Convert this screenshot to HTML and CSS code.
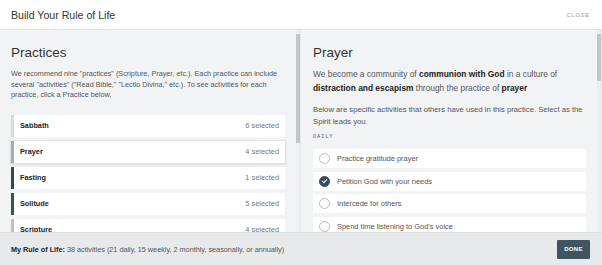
FILE: index.html
```html
<!DOCTYPE html>
<html lang="en">
<head>
  <meta charset="UTF-8">
  <meta name="viewport" content="width=device-width, initial-scale=1.0">
  <title>Build Your Rule of Life</title>
  <link rel="stylesheet" href="styles.css">
</head>
<body>
  <div class="modal">
    <div class="modal-header">
      <h1 class="modal-title">Build Your Rule of Life</h1>
      <a href="#" class="close-link">CLOSE</a>
    </div>

    <div class="modal-body">
      <div class="panel panel-practices">
        <div class="panel-content">
          <h2 class="panel-title">Practices</h2>
          <p class="intro">
            We recommend nine "practices" (Scripture, Prayer, etc.). Each practice can include
            several "activities" ("Read Bible," "Lectio Divina," etc.). To see activities for each
            practice, click a Practice below.
          </p>

          <ul class="practice-list">
            <li class="practice sabbath"><span class="practice-name">Sabbath</span><span class="practice-count">6 selected</span></li>
            <li class="practice prayer active"><span class="practice-name">Prayer</span><span class="practice-count">4 selected</span></li>
            <li class="practice fasting"><span class="practice-name">Fasting</span><span class="practice-count">1 selected</span></li>
            <li class="practice solitude"><span class="practice-name">Solitude</span><span class="practice-count">5 selected</span></li>
            <li class="practice scripture"><span class="practice-name">Scripture</span><span class="practice-count">4 selected</span></li>
          </ul>
        </div>
        <div class="scrollbar"><div class="thumb thumb-practices"></div></div>
      </div>

      <div class="panel panel-detail">
        <div class="panel-content">
          <h2 class="panel-title">Prayer</h2>
          <p class="lead">
            We become a community of <strong>communion with God</strong> in a culture of
            <strong>distraction and escapism</strong> through the practice of <strong>prayer</strong>
          </p>
          <p class="hint">
            Below are specific activities that others have used in this practice. Select as the
            Spirit leads you.
          </p>

          <div class="group-label">DAILY</div>
          <ul class="activity-list">
            <li class="activity"><span class="radio"></span>Practice gratitude prayer</li>
            <li class="activity checked"><span class="radio"></span>Petition God with your needs</li>
            <li class="activity"><span class="radio"></span>Intercede for others</li>
            <li class="activity"><span class="radio"></span>Spend time listening to God's voice</li>
          </ul>
        </div>
        <div class="scrollbar"><div class="thumb thumb-detail"></div></div>
      </div>
    </div>

    <div class="modal-footer">
      <p class="summary"><strong>My Rule of Life:</strong> 38 activities (21 daily, 15 weekly, 2 monthly, seasonally, or annually)</p>
      <button class="button">DONE</button>
    </div>
  </div>
</body>
</html>
```

FILE: styles.css
```css
* {
  box-sizing: border-box;
}
body {
  font-family: 'Liberation Sans', Arial, sans-serif;
  margin: 0;
  padding: 0;
  background-color: #ffffff;
  color: #333333;
}
.modal {
  display: flex;
  flex-direction: column;
  height: 265px;
  width: 602px;
}
.modal-header {
  height: 30px;
  flex: none;
  display: flex;
  justify-content: space-between;
  align-items: center;
  padding: 0 12px 0 11px;
  background-color: white;
  border-bottom: 1px solid #e3e4e6;
}
.modal-title {
  font-size: 10.6px;
  font-weight: 400;
  color: #333333;
  margin: 0;
}
.close-link {
  font-size: 5.6px;
  letter-spacing: 0.9px;
  color: #9a9a9a;
  text-decoration: none;
}
.modal-body {
  flex: 1;
  min-height: 0;
  display: grid;
  grid-template-columns: 301px 301px;
  background-color: #f2f3f5;
}
.panel {
  display: flex;
  min-height: 0;
  overflow: hidden;
  border-right: 1px solid #e6e7e9;
}
.panel-content {
  flex: 1;
  min-width: 0;
  overflow: hidden;
  padding: 15px 11px 0 11px;
}
.panel-detail .panel-content {
  padding-left: 12px;
}
.scrollbar {
  width: 4px;
  flex: none;
  padding-top: 4px;
  background-color: #eceef0;
}
.thumb {
  background-color: #c4c4c4;
}
.thumb-practices {
  height: 109px;
}
.thumb-detail {
  height: 47px;
}
.panel-title {
  font-size: 13.5px;
  font-weight: 400;
  color: #333333;
  margin: 0 0 9px 0;
}
.intro {
  font-size: 7.25px;
  line-height: 10.5px;
  color: #555555;
  margin: 0 0 14px 0;
}
.practice-list,
.activity-list {
  list-style: none;
  margin: 0;
  padding: 0;
}
.practice {
  display: flex;
  justify-content: space-between;
  align-items: center;
  height: 22px;
  margin-bottom: 4px;
  padding: 0 6px 0 6px;
  background-color: white;
  border-left: 3px solid #cccccc;
}
.practice.active {
  box-shadow: 0 1px 3px rgba(0, 0, 0, 0.18);
  outline: 1px solid #e2e3e5;
}
.practice-name {
  font-size: 7.3px;
  font-weight: 700;
  color: #222222;
}
.practice-count {
  font-size: 7.4px;
  color: #777777;
}
.sabbath { border-left-color: #d3dcd5; }
.prayer { border-left-color: #a5acb2; }
.fasting { border-left-color: #3a4650; }
.solitude { border-left-color: #3a5447; }
.scripture { border-left-color: #c9bfb7; }
.lead {
  font-size: 8.4px;
  line-height: 14px;
  color: #555555;
  margin: -2px 0 9px 0;
}
.lead strong {
  color: #222222;
}
.hint {
  font-size: 7.7px;
  line-height: 12px;
  color: #555555;
  margin: 0 0 5px 0;
}
.group-label {
  font-family: 'DejaVu Sans Mono', monospace;
  font-size: 5.4px;
  letter-spacing: 0.8px;
  color: #666666;
  margin-bottom: 10px;
}
.activity {
  display: flex;
  align-items: center;
  gap: 7px;
  height: 19px;
  margin-bottom: 3.7px;
  padding-left: 6px;
  background-color: white;
  font-size: 7.45px;
  color: #555555;
}
.radio {
  width: 11px;
  height: 11px;
  border: 1px solid #b9bbbd;
  border-radius: 50%;
  flex: none;
  position: relative;
}
.activity.checked .radio {
  background-color: #3b4d5a;
  border-color: #3b4d5a;
}
.activity.checked .radio::after {
  content: '';
  position: absolute;
  left: 3.2px;
  top: 1.6px;
  width: 2px;
  height: 4px;
  border: solid white;
  border-width: 0 1px 1px 0;
  transform: rotate(45deg);
}
.modal-footer {
  height: 33px;
  flex: none;
  display: flex;
  justify-content: space-between;
  align-items: center;
  padding: 0 12px 0 11px;
  background-color: #e8e9eb;
  border-top: 1px solid #dcdddf;
}
.summary {
  font-size: 7.25px;
  color: #555555;
  margin: 0;
}
.summary strong {
  color: #222222;
}
.button {
  background-color: #3f5562;
  color: white;
  border: none;
  border-radius: 1px;
  width: 33px;
  height: 19px;
  padding: 0;
  font-family: 'Liberation Sans', Arial, sans-serif;
  font-size: 6px;
  font-weight: 700;
  letter-spacing: 0.3px;
  cursor: pointer;
}
```
